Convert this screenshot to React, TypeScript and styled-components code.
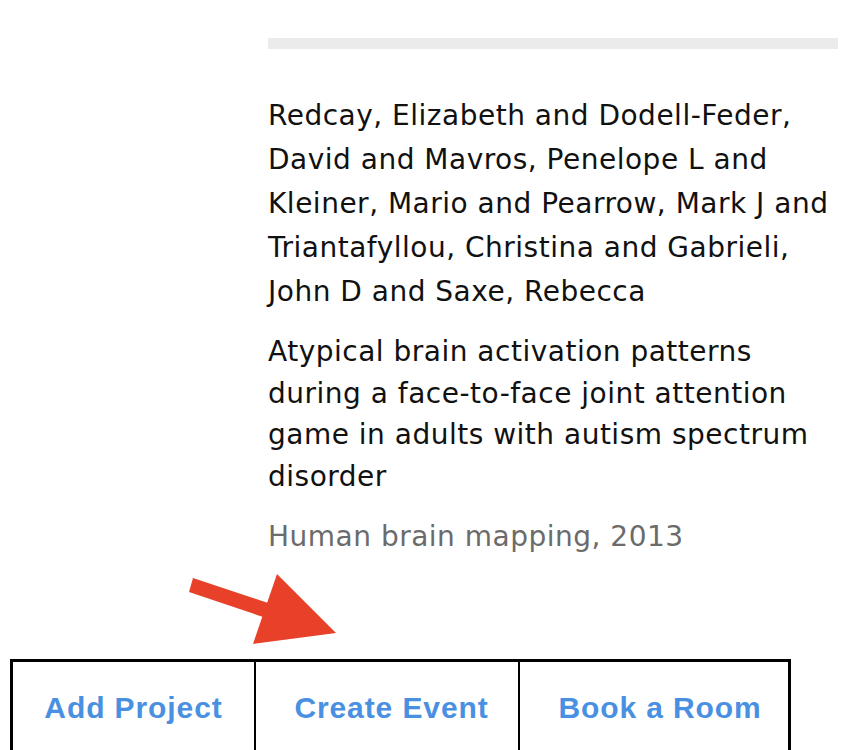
import React from 'react';
import styled, { createGlobalStyle } from 'styled-components';

const GlobalStyle = createGlobalStyle`
  html, body {
    margin: 0;
    padding: 0;
    background: #fff;
    font-family: "DejaVu Sans", "Liberation Sans", sans-serif;
    color: #111;
  }
`;

const Page = styled.div`
  width: 866px;
  height: 750px;
  overflow: hidden;
`;

const Column = styled.div`
  margin-left: 268px;
  width: 570px;
  padding-top: 38px;
`;

const Rule = styled.div`
  height: 11px;
  background: #ebebeb;
  margin-bottom: 45px;
`;

const Para = styled.p<{ $muted?: boolean; $lh: number; $gap?: number }>`
  margin: 0 0 ${(p) => p.$gap ?? 17}px;
  font-size: 28px;
  letter-spacing: 0.5px;
  line-height: ${(p) => p.$lh}px;
  color: ${(p) => (p.$muted ? '#6b6b6b' : '#111')};
`;

const ArrowWrap = styled.div`
  height: 84px;
  padding-left: 188px;
  display: flex;
  align-items: flex-end;
`;

const ButtonRow = styled.div`
  margin-left: 10px;
  display: flex;
  width: 781px;
  height: 110px;
  box-sizing: border-box;
  border: 3px solid #000;
  border-bottom: none;
`;

const ActionButton = styled.button<{ $w: number; $shift?: number; $last?: boolean }>`
  width: ${(p) => p.$w}px;
  flex: none;
  box-sizing: border-box;
  background: none;
  border: none;
  border-right: ${(p) => (p.$last ? 'none' : '2px solid #000')};
  padding: 29px 0 0 ${(p) => p.$shift ?? 0}px;
  display: flex;
  justify-content: center;
  align-items: flex-start;
  font-family: "Liberation Sans", Arial, sans-serif;
  font-weight: 700;
  font-size: 30px;
  letter-spacing: 0.9px;
  color: #4a90e2;
  cursor: pointer;
`;

const Arrow = () => (
  <svg width="160" height="87" viewBox="0 0 160 87">
    <polygon points="5,6 1,20 90,50 95,36" fill="#e8412a" />
    <polygon points="89,2 148,61 65,72" fill="#e8412a" />
  </svg>
);

export default function App() {
  return (
    <Page>
      <GlobalStyle />
      <Column>
        <Rule />
        <Para $lh={44}>
          Redcay, Elizabeth and Dodell-Feder, David and Mavros, Penelope L and Kleiner, Mario and
          Pearrow, Mark J and Triantafyllou, Christina and Gabrieli, John D and Saxe, Rebecca
        </Para>
        <Para $lh={41.5} $gap={19}>
          Atypical brain activation patterns during a face-to-face joint attention game in adults
          with autism spectrum disorder
        </Para>
        <Para $lh={42} $muted>
          Human brain mapping, 2013
        </Para>
      </Column>
      <ArrowWrap>
        <Arrow />
      </ArrowWrap>
      <ButtonRow>
        <ActionButton $w={243}>Add Project</ActionButton>
        <ActionButton $w={264} $shift={9}>
          Create Event
        </ActionButton>
        <ActionButton $w={271} $shift={9} $last>
          Book a Room
        </ActionButton>
      </ButtonRow>
    </Page>
  );
}
